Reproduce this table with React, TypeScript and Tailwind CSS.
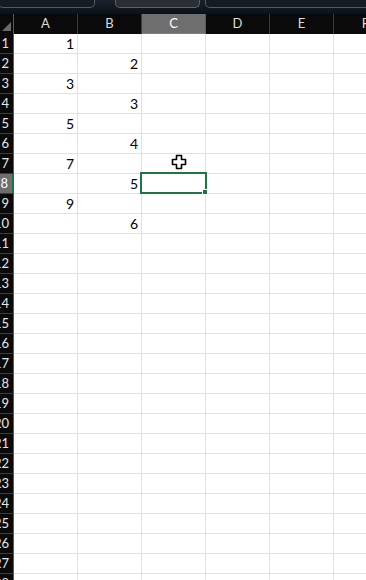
const cols = ["A", "B", "C", "D", "E", "F"];

const values: Record<string, string> = {
  A1: "1",
  B2: "2",
  A3: "3",
  B4: "3",
  A5: "5",
  B6: "4",
  A7: "7",
  B8: "5",
  A9: "9",
  B10: "6",
};

function Cursor() {
  return (
    <svg width="16" height="16" viewBox="0 0 16 16" className="absolute left-[171px] top-[154px]">
      <path
        d="M5.5 1.5h5v4h4v5h-4v4h-5v-4h-4v-5h4z"
        fill="#fff"
        stroke="#000"
        strokeWidth="1.6"
        strokeLinejoin="round"
      />
    </svg>
  );
}

export default function App() {
  const rows = Array.from({ length: 28 }, (_, i) => i + 1);

  return (
    <div className="relative w-[366px] h-[580px] overflow-hidden bg-white font-['Lato','Liberation_Sans',sans-serif]">
      {/* ribbon edge */}
      <div className="h-[14px] flex items-start gap-[10px] bg-gradient-to-b from-[#1b222b] to-[#0b1118]">
        <div className="w-[97px] h-[8px] -ml-[2px] rounded-b-[5px] border border-t-0 border-[#565b62] bg-[#161c24]" />
        <div className="ml-[10px] w-[85px] h-[8px] rounded-b-[5px] border border-t-0 border-[#5d6168] bg-[#2a2f36]" />
        <div className="ml-[-5px] flex-1 h-[8px] -mr-[4px] rounded-b-[5px] border border-t-0 border-[#565b62] bg-[#161c24]" />
      </div>

      {/* column header */}
      <div className="flex h-[20px] bg-[#0a0a0a] text-[13px] text-[#dcdcdc]">
        <div className="relative w-[14px] shrink-0 border-r border-[#5a5a5a]">
          <div className="absolute right-[2px] bottom-[3px] w-0 h-0 border-l-[9px] border-l-transparent border-b-[9px] border-b-[#6a6a6a]" />
        </div>
        {cols.map((c) => (
          <div
            key={c}
            className={
              c === "C"
                ? "w-[64px] shrink-0 flex items-center justify-center border-r border-[#5a5a5a] bg-[#6e6e6e] text-white border-b border-b-[#4f9a70]"
                : "w-[64px] shrink-0 flex items-center justify-center border-r border-[#3c3c3c]"
            }
          >
            {c}
          </div>
        ))}
      </div>

      {/* rows */}
      {rows.map((r) => (
        <div key={r} className="flex h-[20px]">
          <div
            className={
              r === 8
                ? "w-[14px] shrink-0 overflow-hidden flex justify-end items-center pr-[4px] bg-[#6e6e6e] text-white text-[13px] border-b border-[#3c3c3c] border-r-2 border-r-[#217346]"
                : "w-[14px] shrink-0 overflow-hidden flex justify-end items-center pr-[4px] bg-[#0a0a0a] text-[#e6e6e6] text-[13px] border-b border-[#3c3c3c] border-r border-r-[#5a5a5a]"
            }
          >
            <span className="whitespace-nowrap">{r}</span>
          </div>
          {cols.map((c) => (
            <div
              key={c}
              className="w-[64px] shrink-0 flex items-end justify-end pr-[3px] pb-[2px] border-r border-b border-[#e1e1e1] text-[14px] leading-none text-black"
            >
              {values[c + r] ?? ""}
            </div>
          ))}
        </div>
      ))}

      {/* selected cell C8 */}
      <div className="absolute left-[140px] top-[172px] w-[67px] h-[22px] border-2 border-[#217346]" />
      <div className="absolute left-[202px] top-[189px] w-[6px] h-[6px] bg-[#217346] border border-white" />

      <Cursor />
    </div>
  );
}
